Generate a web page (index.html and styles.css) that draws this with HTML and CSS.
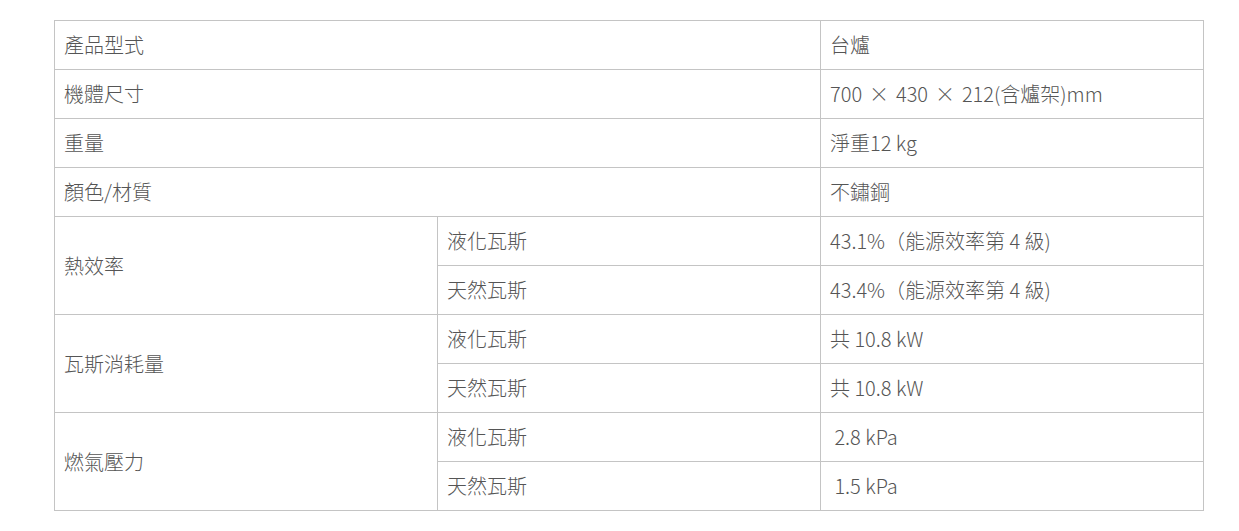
FILE: index.html
```html
<!DOCTYPE html>
<html lang="zh-Hant">
<head>
<meta charset="utf-8">
<link rel="stylesheet" href="styles.css">
</head>
<body>
<div class="wrap">
<table class="spec">
<colgroup><col class="c"><col class="c"><col class="c"></colgroup>
<tbody>
<tr><td colspan="2">產品型式</td><td>台爐</td></tr>
<tr><td colspan="2">機體尺寸</td><td>700 <span class="times">×</span> 430 <span class="times">×</span> 212(含爐架)mm</td></tr>
<tr><td colspan="2">重量</td><td>淨重12 kg</td></tr>
<tr><td colspan="2">顏色/材質</td><td>不鏽鋼</td></tr>
<tr><td rowspan="2">熱效率</td><td>液化瓦斯</td><td>43.1%（能源效率第 4 級)</td></tr>
<tr><td>天然瓦斯</td><td>43.4%（能源效率第 4 級)</td></tr>
<tr><td rowspan="2">瓦斯消耗量</td><td>液化瓦斯</td><td>共 10.8 kW</td></tr>
<tr><td>天然瓦斯</td><td>共 10.8 kW</td></tr>
<tr><td rowspan="2">燃氣壓力</td><td>液化瓦斯</td><td>&nbsp;2.8 kPa</td></tr>
<tr><td>天然瓦斯</td><td>&nbsp;1.5 kPa</td></tr>
</tbody>
</table>
</div>
</body>
</html>
```
FILE: styles.css
```css
html, body { margin: 0; padding: 0; background: #fff; }
.wrap { padding: 20px 0 0 54px; }
.spec {
  border-collapse: collapse;
  table-layout: fixed;
  width: 1150px;
  font-family: "Noto Sans CJK TC", "Noto Sans", sans-serif;
  font-size: 20px;
  font-weight: 300;
  color: #555;
}
.spec .c { width: 383px; }
.spec td {
  border: 1px solid #c4c4c4;
  height: 49px;
  padding: 0 9px;
  box-sizing: border-box;
  vertical-align: middle;
  line-height: 28px;
  white-space: nowrap;
}
.times { padding: 0 2.5px; }
```
